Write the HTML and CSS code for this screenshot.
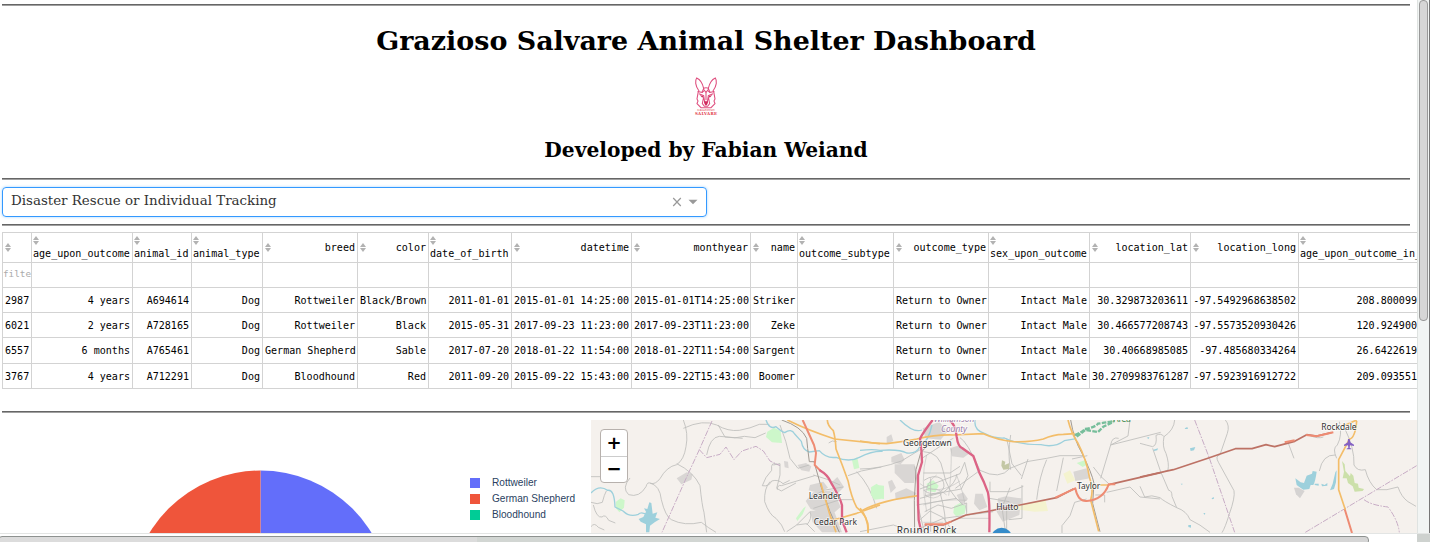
FILE: index.html
```html
<!DOCTYPE html>
<html lang="en">
<head>
<meta charset="utf-8">
<title>Animal Shelter Dashboard</title>
<link rel="stylesheet" href="styles.css">
</head>
<body>
<div class="window">
<main class="page">
<hr class="rule">
<h1 class="title">Grazioso Salvare Animal Shelter Dashboard</h1>
<svg class="logo" viewBox="0 0 90 114" role="img" aria-label="Grazioso Salvare">
<g fill="none" stroke="#df4f7f" stroke-width="3.2">
<path d="M24 42C12 26 12 10 17 3C28 8 35 20 38 34L33 46L22 44zM66 42C78 26 78 10 73 3C62 8 55 20 52 34L57 46L68 44z"/>
<path d="M37 34Q45 30 53 34M22 43L18 66L21 72L18 80L30 92H60L72 80L69 72L72 66L68 43M37 36L45 46L53 36M33 47L40 40M57 47L50 40"/>
<path d="M24 50L38 56L41 76L45 82L49 76L52 56L66 50M38 60L34 80L40 88H50L56 80L52 60M45 46V70"/>
</g>
<path fill="#cf2b5e" d="M39 73H51L49 82L45 86L41 82zM26 54L37 58L34 62zM64 54L53 58L56 62z"/>
<text class="logo-small" x="45" y="102" textLength="52">GRAZIOSO</text>
<text class="logo-big" x="45" y="113" textLength="66">SALVARE</text>
</svg>
<h2 class="author">Developed by Fabian Weiand</h2>
<hr class="rule">
<div class="dropdown"><span class="value">Disaster Rescue or Individual Tracking</span>
<svg class="clear" viewBox="0 0 10 10"><path d="M1.2 1L8.8 9M8.8 1L1.2 9"/></svg>
<svg class="arrow" viewBox="0 0 10 6"><path d="M.5 .8H9.5L5 5.3z"/></svg></div>
<hr class="rule">
<div class="table-wrap">
<table class="data">
<colgroup><col class="w29"><col class="w101"><col class="w59"><col class="w71"><col class="w95"><col class="w71"><col class="w83"><col class="w120"><col class="w119"><col class="w47"><col class="w96"><col class="w95"><col class="w101"><col class="w101"><col class="w108"><col class="w119"></colgroup>
<thead><tr>
<th><div class="head"><i class="sort"></i></div></th>
<th><div class="head two"><i class="sort"></i><span>age_upon_outcome</span></div></th>
<th><div class="head two"><i class="sort"></i><span>animal_id</span></div></th>
<th><div class="head two"><i class="sort"></i><span>animal_type</span></div></th>
<th><div class="head"><i class="sort"></i><span>breed</span></div></th>
<th><div class="head"><i class="sort"></i><span>color</span></div></th>
<th><div class="head two"><i class="sort"></i><span>date_of_birth</span></div></th>
<th><div class="head"><i class="sort"></i><span>datetime</span></div></th>
<th><div class="head"><i class="sort"></i><span>monthyear</span></div></th>
<th><div class="head"><i class="sort"></i><span>name</span></div></th>
<th><div class="head two"><i class="sort"></i><span>outcome_subtype</span></div></th>
<th><div class="head"><i class="sort"></i><span>outcome_type</span></div></th>
<th><div class="head two"><i class="sort"></i><span>sex_upon_outcome</span></div></th>
<th><div class="head"><i class="sort"></i><span>location_lat</span></div></th>
<th><div class="head"><i class="sort"></i><span>location_long</span></div></th>
<th><div class="head two"><i class="sort"></i><span>age_upon_outcome_in_</span></div></th>
</tr></thead>
<tbody>
<tr class="filter"><td>filte</td><td></td><td></td><td></td><td></td><td></td><td></td><td></td><td></td><td></td><td></td><td></td><td></td><td></td><td></td><td></td></tr>
<tr><td>2987</td><td>4 years</td><td>A694614</td><td>Dog</td><td>Rottweiler</td><td>Black/Brown</td><td>2011-01-01</td><td>2015-01-01 14:25:00</td><td>2015-01-01T14:25:00</td><td>Striker</td><td></td><td>Return to Owner</td><td>Intact Male</td><td>30.329873203611</td><td>-97.5492968638502</td><td>208.800099</td></tr>
<tr><td>6021</td><td>2 years</td><td>A728165</td><td>Dog</td><td>Rottweiler</td><td>Black</td><td>2015-05-31</td><td>2017-09-23 11:23:00</td><td>2017-09-23T11:23:00</td><td>Zeke</td><td></td><td>Return to Owner</td><td>Intact Male</td><td>30.466577208743</td><td>-97.5573520930426</td><td>120.924900</td></tr>
<tr class="tall"><td>6557</td><td>6 months</td><td>A765461</td><td>Dog</td><td>German Shepherd</td><td>Sable</td><td>2017-07-20</td><td>2018-01-22 11:54:00</td><td>2018-01-22T11:54:00</td><td>Sargent</td><td></td><td>Return to Owner</td><td>Intact Male</td><td>30.40668985085</td><td>-97.485680334264</td><td>26.6422619</td></tr>
<tr><td>3767</td><td>4 years</td><td>A712291</td><td>Dog</td><td>Bloodhound</td><td>Red</td><td>2011-09-20</td><td>2015-09-22 15:43:00</td><td>2015-09-22T15:43:00</td><td>Boomer</td><td></td><td>Return to Owner</td><td>Intact Male</td><td>30.2709983761287</td><td>-97.5923916912722</td><td>209.093551</td></tr>
</tbody>
</table>
</div>
<hr class="rule">
<section class="charts">
<div class="pie-panel">
<svg class="pie" viewBox="0 0 450 113"><path fill="#636efa" d="M260.500 50.500A130 130 0 0 1 390.500 180.500H260.500z"/><path fill="#ef553b" d="M260.500 50.500A130 130 0 0 0 130.500 180.500H260.500z"/></svg>
<ul class="legend"><li><i class="swatch blue"></i>Rottweiler</li><li><i class="swatch red"></i>German Shepherd</li><li><i class="swatch green"></i>Bloodhound</li></ul>
</div>
<div class="map">
<svg class="tiles" viewBox="0 0 826 113">
<!-- west -->
<g transform="translate(-11 -15) scale(.333333)">
<g class="town"><path d="M290 220l30-18 18 6-4 16-30 14zM612 168l12 2 2 20-12-3zM652 180l26-6 16 10-6 16-24-4zM690 240l40-10 14 18-28 16-30-8zM750 236l22-20 20 30-20 20zM700 262l60-6 22 50-30 26-60-20-15-24zM690 318l70-6 26 70h-60l-28-30z"/></g>
<g class="wood"><path d="M562 80l20-12 20 10 4 36-30-2-18-16zM816 165l16-8 6 32-16 4zM872 248l20-8 20 2v40l-24-2zM108 290l14-10 12 6-2 22-14 14-10-12zM648 340l22-30 8-6-10 24-16 20z"/></g>
<g class="minor">
<path d="M310 45q16 40 8 80q-6 40-28 54q-30 6-50 42q-14 18-28 14q-10-6-14 10q-20 34-52 24q-22-20 4-50M310 70q60-28 100-10q34 20 68 16q34-6 60-18l30 0M415 60q10 20 20 36q30 6 58-2l32 4 32-14M380 150q10-54 38-56l70 6M33 215h50M290 176q50 24 70 66q6 60 12 80l8 60M210 234q30 8 34 50q12 50 30 60q40 20 90 8q20 16 44 30M33 292q20 8 34 0 6-24 12-34M40 300q10 40 26 36 10-10 20 10l20 8M33 365q10-14 22 2l18 8M595 180q-24-14-20 16q-20 20-28 46q20 4 28-14q20-6 34 8l20-10M570 230q-18 20-16 60q14 40 34 50q20 20 26 40M592 254q0-16 12-12l100-30M580 180l20-4v34l-10 40 14 8 44-24M700 210q40 10 80 30M804 212l40-14 60-12M690 280l40-24 60-10M700 310l80-26 40 0M650 360l40-40q8 20-10 40M620 380l30-20 30-4 24 24M830 200q40 40 60 110M770 110q-14-6-24 4M600 60q20 50 30 100l24 30 34-10"/>
</g>
<path class="boundary" d="M396 48L358 134 320 216 246 382M358 134l22 24 40-10 18-22 24 38 24-26 42-14 22 14 20 30 30 14"/>
<path class="river" d="M558 45q10 30 30 20 16 14 26 18 20-14 30 4l20 22q4 26 24 32l30-4q20 24 50 20 40 16 70 0 40-20 70-18M33 264q24-26 50-8 20-4 22 50l24 12q20 20 46 10 10-10 30 4"/>
<path class="water" d="M176 342l14-6 8-16-6-10 10 2 6-20 6 2 4 32 14-4-6 16 14 4-16 10-14 10-2 20-10 0v-24l-16-8z"/>
<path class="rail" d="M605 45q60 20 75 55 2 26 8 70h14q20 80 48 150l28 62"/>
<path class="orange" d="M622 45q60 30 142 57l136 14M742 45q0 16 18 32 6 20 8 55 20 50 36 95 10 50 26 80 40 30 34 75M760 345l70-20 70-25M722 234l26 90 20 58"/>
<path class="trunk" d="M668 45L702 120l6 24-4 36 20 20"/>
<path class="motor" d="M718 195q26 15 34 36 30 50 34 70v45l14 36"/>
<text class="place halo" x="735" y="281" textLength="98">Leander</text>
<text class="place halo" x="766" y="359" textLength="130">Cedar Park</text>
</g>
<!-- centre -->
<g transform="translate(269 -15) scale(.333333)">
<g class="town"><path d="M80 96l14-8 6 20-20 8zM94 156l30-12 10 20-12 14-28-6zM104 178h60l4 20-6 36h-28l-30-30zM84 230l12-6 12 24-16 16zM105 264l34-14 30 14-8 16-54 2zM270 130l30-10 30 24-20 14-34-4zM290 270l20-8 14 20-20 18zM346 266l22 0 14 40-24 10-16-20zM414 280l24-6 46 6-6 50-50 20-18-30zM188 70l50-20 24 30-20 24-46-4zM640 200l40-10 10 30-44 8z"/></g>
<g class="wood"><path d="M34 246l16-10 16 14-4 32-20 2-10-16zM282 304l18-10 18 8-4 24-26 8-8-10zM200 236l20-10 16 16-10 20-24-4zM270 368l14 6-4 10h-16zM650 174l24-8 10 12-16 8z"/></g>
<path fill="#c3c7a5" d="M426 166l10 4-2 10 14-6v18l-18 2-6-12z"/>
<path fill="#f4f3cf" d="M466 300l90-16 8 34-40 2-60-8zM610 206l20-10 16 30-24 10z"/>
<g class="minor">
<path d="M0 192q60 0 124-24l60-36M164 184q14 60 10 120l20 80M190 140q50 0 60 60t60 100M180 252l120-46 14-34 10 40-20 40-110 20M190 204h80l30-20M180 280l70-18q40-30 40-54M194 320l40-20 40 10 46-16v34M180 344l30-26 40 20 30 44M192 226q30-20 54-4 14 24-4 38-30 14-50-4M212 220v160M240 262q20 70 16 120M186 160q90-60 94-60M300 98q20 10 60 98l-74 54M360 196q60 30 90-6l50-20 60-10 40-8 70 0M452 90q-10 60 0 104M440 100l16 76 28 36M484 222l20-60M610 158l-20 100M560 164q-22 50-30 120M390 230v30l60 0 40-16M450 248l-24 60 10 70M486 240v100l-40 4M388 280l60 10M680 282l-36 10-14 40-24 30v22M636 162l46-10M700 186q20 30 46 50M776 100q-20-6-24 20l-30 100M752 120l150-38M810 45l-6 48-50 26M740 262l70-16 30 30 60 6M706 270h28v22M0 380l100-20 70 24M170 300l120-20M180 370l70-30 150-20M440 310v70"/>
<path d="M180 236q50 40 120-8M190 300q60-20 130-14M190 256q40-14 70 14M200 150q-20 70 0 170M274 132q0 90-8 140M290 210q20 50 30 110M300 340h90M190 352h60M230 210q-30 20-34 60 24 20 50-4" opacity=".7"/>
</g>
<path class="river" d="M0 136q40-4 60 0 60-4 80 8 30 4 40-20 26-16 36-64M120 45q40 40 66 30M345 45q-4 30 28 40 30 16 60 14 40 20 110 20 40 10 70-12l36-6"/>
<path d="M644 90q26-10 30-18 30-4 40-16 30-4 50-8M650 95l26-20 38 6 16-16 30-14" fill="none" stroke="#77be9b" stroke-width="7" stroke-dasharray="14 4"/>
<path class="rail" d="M164 384q-4-100 4-190l14-50 30-34M632 45q10 60 34 100 30 60 36 90l-4 60 22 85"/>
<path class="orange" d="M0 108q40 8 80 8 60-8 90-14 60-14 110-12l90-4q40 18 90 24 50 2 90-8 30-14 60-14l34-2M624 45q10 40 30 70 26 50 34 100 14 40 4 70l24 94M0 320q60-34 176-48M0 310q26 30 24 74M720 240h30"/>
<path d="M480 300l110-22 50-26M750 238l152-35" class="brown"/>
<path d="M388 318l92-18M388 318L318 330l-68 30H194" class="brown"/>
<path class="trunk" d="M586 278l60-28q8 40 34 38 50-4 66-50h20M194 358h56l24-8"/>
<path class="motor" d="M218 45q-28 36-38 56l4 30 2 40-12 40v80l2 54 8 37M266 45q20 10 24 50 4 30 16 34l34 24 18 50q14 26 26 60 6 30 4 119"/>
<circle cx="425" cy="399" r="31" fill="#358cca"/>
<text class="county halo" x="282" y="51" textLength="122">Williamson</text><text class="county halo" x="282" y="80" textLength="78">County</text>
<text class="place halo" x="202" y="124" textLength="146">Georgetown</text>
<text class="place halo" x="442" y="315" textLength="66">Hutto</text>
<text class="place halo" x="686" y="251" textLength="70">Taylor</text>
<text class="place big halo" x="200" y="388" textLength="180">Round Rock</text>
<text class="place area" x="786" y="51" textLength="52">Area</text>
</g>
<!-- east -->
<g transform="translate(549 -15) scale(.333333)">
<g class="minor"><path d="M104 45q-2 30-32 50-8-12-24-4 4 30-10 34-16-4-38-10M72 95q-6 30 6 50 10 30 6 50l-24 10M38 130l24 70 24 56q10 0 10 18l14 34q-40-20-50-30-26-10-46-2L0 244M110 308q30 10 40 36 30 14 60 38M256 45q14 16 6 40l-22 64q-16 4-4 24l46 84q4 20-14 70-12 40-22 56M444 112l18 48M538 198q10-50 48-48M598 50q10 40-6 70-16 10-2 40M614 70q30 60 28 110 10 20 34 14 10 40 34 60 30 4 64-8 10 30 30 44l24 14M550 96q-16 6-40-4"/></g>
<path class="boundary" d="M164 45l44 114 76 223M496 382l334-200M672 284q20 16 72 22 30 40 34 76"/>
<g class="water"><path d="M466 220l16 12 10 2 8-22 16-6 2-8 12 2q-4 30-10 40l-8 0-4 12-18 2-12-8-8-6zM570 256l8-20 8-34 4-6-2 36-6 20zM524 236l12 0 0 6-12-2zM544 236l10 4 8-6v8l-16 2zM150 130l16-4-4 10-10 2zM40 134l14-4-2 6-10 2zM134 70l8-4 2 6h-8zM145 360l8 0 0 8-8-2zM215 280l6-4 1 5-6 2zM190 324l6 0-2 6zM122 236l6 0-2 4zM20 98l8-2-2 6z"/></g>
<path fill="#d5d3d2" d="M462 248l14 0 18 10-14 22-12-12z"/><path fill="#cce0aa" d="M606 168l8 10 2 20 14 16 2-10 8 8 4 22 10 2 2 12 16 4-4 6-24 2-6-16-14-10-4-14-12 0 4-20z"/>
<path class="brown" d="M0 216l100-22 108-36 78-27 50 0 42-12 26 6 60-16 36-20 30 4 44-10"/>
<path class="trunk" d="M434 112l30-6M498 90l32 4 50-12M614 312l22 72"/>
<path class="orange" d="M650 45l-40 18M650 48q-4 50-22 55L596 164v90q10 30 20 60"/>
<text class="place halo" x="597" y="76" textLength="106">Rockdale</text>
<path fill="#8461c4" d="M624 102h5l2 10 11 7v4l-12-2-1 7 5 3v2h-14v-2l5-3-1-7-12 2v-4l11-7z"/>
</g>
</svg>
<div class="zoom"><span>+</span><span>−</span></div>
</div>
</section>
</main>
<div class="vbar"><div class="vthumb"></div></div>
<div class="hbar"><div class="hthumb"></div></div>
</div>
</body>
</html>
```
FILE: styles.css
```css
* { box-sizing: border-box; }
body { margin: 0; overflow: hidden; background: #fff; font-family: "DejaVu Serif", serif; color: #000; }
.window { display: grid; grid-template: 533px 9px / 1417px 13px; width: 1430px; height: 542px; }
.page { overflow: hidden; padding: 4px 0 0 2px; }
.rule { width: 1408px; height: 2px; margin: 0; border: 0; border-top: 1px solid #666; border-bottom: 1px solid #a0a0a0; }
.title { width: 1408px; margin: 19px 0 0; font-size: 26.92px; line-height: 32px; text-align: center; white-space: nowrap; }
.logo { display: block; width: 30px; height: 38px; margin: 20px 0 0 689px; }
.logo-small, .logo-big { text-anchor: middle; fill: #ea7480; font: bold 8px "DejaVu Serif", serif; }
.logo-big { fill: #e23a4a; font-size: 12px; }
.author { width: 1408px; margin: 22px 0 14px; font-size: 20.2px; line-height: 27px; text-align: center; }
.dropdown { display: flex; align-items: center; width: 705px; height: 30px; margin: 7px 0 7px; padding: 0 8px; border: 1px solid #3399ff; border-radius: 4px; box-shadow: 0 0 3px #a5d5ff; }
.value { flex: 1; margin-top: -3px; font-size: 13.42px; color: #333; }
.clear { width: 10px; height: 10px; fill: none; stroke: #999; stroke-width: 1.2; }
.arrow { width: 10px; height: 6px; margin-left: 6px; fill: #999; }
.table-wrap { width: 1415px; height: 185px; padding-top: 6px; overflow: hidden; }
.data { width: 1415px; table-layout: fixed; border-collapse: separate; border-spacing: 0; border-top: 1px solid #d3d3d3; font: 10.05px/12px "DejaVu Sans Mono", monospace; }
.w29 { width: 29px; } .w101 { width: 101px; } .w59 { width: 59px; } .w71 { width: 71px; } .w95 { width: 95px; }
.w83 { width: 83px; } .w120 { width: 120px; } .w119 { width: 119px; } .w47 { width: 47px; } .w96 { width: 96px; } .w108 { width: 108px; }
th, td { height: 25px; padding: 1px 2px 0; border-left: 1px solid #d3d3d3; border-bottom: 1px solid #d3d3d3; font-weight: normal; text-align: right; white-space: nowrap; }
td:last-child { padding-right: 0; }
th { height: 30px; padding-top: 0; }
.tall td { height: 26px; }
.filter td { padding: 0 0 2px; text-align: left; color: #aaa; font-size: 9.3px; }
.head { display: flex; align-items: center; justify-content: space-between; height: 29px; }
.two { flex-direction: column; align-items: flex-start; justify-content: flex-start; margin-left: -1px; padding-top: 3px; }
.two span { margin-top: 3px; }
.sort { display: flex; flex-direction: column; gap: 1px; width: 6px; height: 9px; }
.sort::before, .sort::after { content: ""; border: 3px solid transparent; border-top: 0; border-bottom: 4px solid #b2b2b2; }
.sort::after { border-bottom: 0; border-top: 4px solid #b2b2b2; }
.charts { display: flex; height: 113px; margin: 7px 0 0 -2px; }
.pie-panel { display: flex; width: 591px; }
.pie { width: 450px; height: 113px; }
.legend { margin: 55px 0 0 20px; padding: 0; list-style: none; font: 10.1px/16px "Liberation Sans", Arial, sans-serif; color: #2a3f5f; }
.legend li { display: flex; align-items: center; height: 16px; white-space: nowrap; }
.swatch { width: 10px; height: 10px; margin-right: 12px; }
.blue { background: #636efa; } .red { background: #ef553b; } .green { background: #00cc96; }
.map { position: relative; width: 826px; height: 113px; background: #f5f1ed; }
.tiles { display: block; width: 826px; height: 113px; }
.minor, .boundary, .river, .rail, .orange, .trunk, .motor, .brown { fill: none; stroke-linejoin: round; }
.minor { stroke: #bdbdbb; stroke-width: 2.5; }
.boundary { stroke: #c7acc5; stroke-width: 3; stroke-dasharray: 18 4 5 4; }
.river { stroke: #9dd0dc; stroke-width: 4; }
.water { fill: #9dd0dc; }
.town { fill: #d9d6d4; }
.wood { fill: #cdf7ca; }
.rail { stroke: #a09a93; stroke-width: 3; }
.orange { stroke: #f3bd69; stroke-width: 5; }
.trunk { stroke: #ee8b73; stroke-width: 6; }
.motor { stroke: #dc6385; stroke-width: 7; }
.brown { stroke: #bd7265; stroke-width: 5; }
.place, .county { text-anchor: middle; font: 25.5px "Noto Sans", sans-serif; fill: #333; }
.halo { paint-order: stroke; stroke: rgba(255,255,255,.65); stroke-width: 5px; }
.county { fill: #9b7fab; font-style: italic; }
.big { font-size: 30px; }
.area { fill: #38854a; }
.zoom { position: absolute; top: 9px; left: 9px; width: 28px; height: 54px; border: 1px solid #b7b1ad; border-radius: 4px; background: #fff; }
.zoom span { display: block; height: 26px; font: bold 18px/26px "DejaVu Sans", sans-serif; text-align: center; }
.zoom span + span { border-top: 1px solid #ccc; line-height: 24px; }
.vbar { grid-row: 1; grid-column: 2; padding-left: 1px; border-left: 1px solid #dfe3e1; border-right: 1px solid #777; background: #f2f5f4; }
.vthumb { width: 9px; height: 321px; border: 1px solid #999; border-radius: 4px; background: #d6d6d6; }
.hbar { grid-column: 1 / 3; padding-top: 2px; border-top: 1px solid #e3e5e4; background: linear-gradient(90deg, #fff 1417px, #ced2cf 0); }
.hthumb { width: 1371px; height: 9px; margin-left: -2px; border: 1px solid #8e9290; border-radius: 4px; background: linear-gradient(90deg, #dcdcdc 478px, #d2d6d3 0 1000px, #d5d5d5 0); }
```
